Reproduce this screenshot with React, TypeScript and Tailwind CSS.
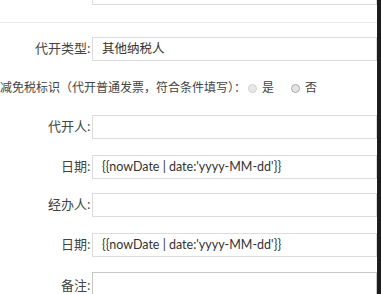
const font = '"Noto Sans", "Noto Sans CJK SC", sans-serif';
const inputFont = '"Lato", "Noto Sans CJK SC", sans-serif';

function Label({ text, className = '' }: { text: string; className?: string }) {
  return (
    <div className={`w-[92px] shrink-0 text-right text-[13px] text-[#444] whitespace-nowrap ${className}`}>
      {text}
      <span className="inline-block w-[5px] text-left">:</span>
    </div>
  );
}

function Field({ label, value, className = '' }: { label: string; value?: string; className?: string }) {
  return (
    <div className={`flex items-center h-[24px] shrink-0 ${className}`}>
      <Label text={label} />
      <div
        className="flex-1 h-full flex items-center border border-[#dcdcdc] pl-[9px] text-[12.5px] text-[#333]"
        style={{ fontFamily: inputFont }}
      >
        {value}
      </div>
    </div>
  );
}

function Radio({ dark }: { dark?: boolean }) {
  return (
    <span
      className={`inline-block w-[9px] h-[9px] rounded-full border ${
        dark ? 'border-[#a8a8a8] bg-[#e4e4e4]' : 'border-[#cfcfcf] bg-[#e8e8e8]'
      }`}
    />
  );
}

export default function App() {
  const dateExpr = "{{nowDate | date:'yyyy-MM-dd'}}";
  return (
    <div className="flex w-[381px] h-[294px] overflow-hidden bg-white" style={{ fontFamily: font }}>
      <div className="flex-1 flex flex-col">
        {/* 上一个输入框的底部 */}
        <div className="h-[5px] pl-[92px] shrink-0">
          <div className="h-full border-x border-b border-[#dcdcdc]" />
        </div>
        <div className="mt-[17px] border-t border-[#e8e8e8] shrink-0" />

        <Field label="代开类型" value="其他纳税人" className="mt-[14px]" />

        <div className="mt-[17px] h-[20px] flex items-center text-[12px] text-[#444] shrink-0">
          <span className="whitespace-nowrap">减免税标识（代开普通发票，符合条件填写）：</span>
          <span className="ml-[2px] flex items-center gap-[5px]">
            <Radio /> 是
          </span>
          <span className="ml-[17px] flex items-center gap-[5px]">
            <Radio dark /> 否
          </span>
        </div>

        <Field label="代开人" className="mt-[17px]" />
        <Field label="日期" value={dateExpr} className="mt-[16px]" />
        <Field label="经办人" className="mt-[14px]" />
        <Field label="日期" value={dateExpr} className="mt-[16px]" />

        <div className="flex mt-[15px] shrink-0">
          <Label text="备注" className="pt-[4px]" />
          <div className="flex-1 h-[40px] border border-[#c8c8c8]" />
        </div>
      </div>
      <div className="w-[4px] h-full bg-[#1c1c1c] shrink-0" />
    </div>
  );
}
